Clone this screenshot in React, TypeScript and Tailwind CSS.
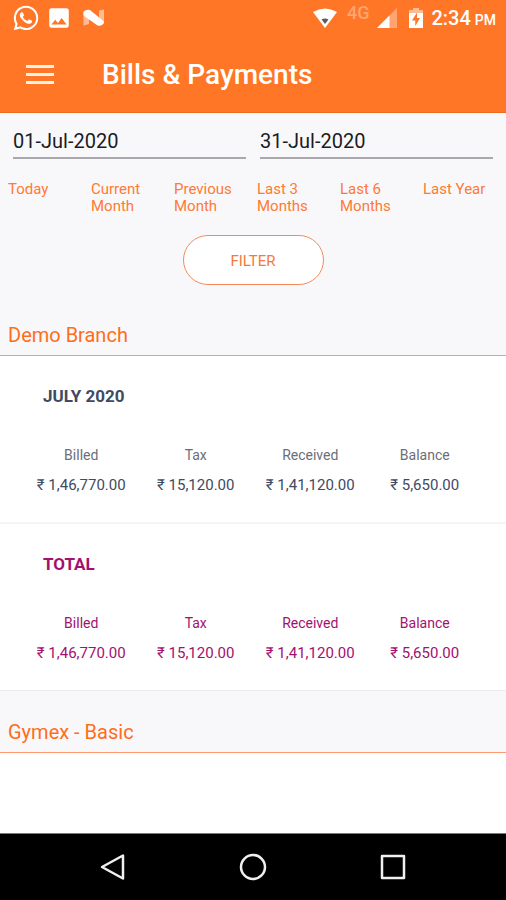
import { FaWhatsapp } from "react-icons/fa";
import { MdImage } from "react-icons/md";

const RANGES = [
  "Today",
  "Current Month",
  "Previous Month",
  "Last 3 Months",
  "Last 6 Months",
  "Last Year",
];

const AMOUNTS = [
  { label: "Billed", value: "₹ 1,46,770.00" },
  { label: "Tax", value: "₹ 15,120.00" },
  { label: "Received", value: "₹ 1,41,120.00" },
  { label: "Balance", value: "₹ 5,650.00" },
];

function StatusBar() {
  return (
    <div className="flex h-9 items-center justify-between pl-3 pr-2.5">
      <div className="flex items-center gap-1.5">
        <FaWhatsapp className="size-7" />
        <MdImage className="size-[26px]" />
        <svg viewBox="0 0 24 18" className="ml-1 h-4.5 w-6" aria-hidden="true">
          <path d="M1.500 2 L7 1 V15 L1.500 16.500 Z" fill="#fff" opacity="0.5" />
          <path d="M17 1.500 L22 0.500 V15 L17 16.500 Z" fill="#fff" opacity="0.5" />
          <path d="M1.500 3 Q4 0 8 1 L22 12.500 Q21 17.500 15.500 16.500 L1.500 6.500 Z" fill="#fff" />
        </svg>
      </div>
      <div className="flex items-center">
        <svg viewBox="0 0 24 20" className="h-5 w-6" aria-hidden="true">
          <path d="M0 4 Q12 -3 24 4 L12 20 Z" fill="#fff" />
          <path d="M8.500 11.500 Q12 9.500 15.500 11.500 L12 16 Z" fill="#5b5b60" />
        </svg>
        <span className="ml-2.5 mb-2.5 text-lg font-medium leading-5 text-[#ffa672]">
          4G
        </span>
        <svg viewBox="0 0 20 20" className="ml-2 h-5 w-5" aria-hidden="true">
          <path d="M20 0 V20 H0 Z" fill="#fff" opacity="0.35" />
          <path d="M12.500 7.500 V20 H0 Z" fill="#fff" />
        </svg>
        <svg viewBox="0 0 14 20" className="ml-3 h-5 w-3.5" aria-hidden="true">
          <path d="M4 0 H10 V2 H14 V5 H0 V2 H4 Z" fill="#fff" opacity="0.5" />
          <path d="M0 5 H14 V20 H0 Z" fill="#fff" />
          <path d="M8 4.500 L3 12.500 H6.300 V18 L11 10 H8 Z" fill="#ff7626" />
        </svg>
        <span className="ml-2 text-xl font-medium leading-6">2:34</span>
        <span className="ml-1 mt-1 text-sm font-medium leading-5">PM</span>
      </div>
    </div>
  );
}

function DateField({ label, value }: { label: string; value: string }) {
  return (
    <input
      type="text"
      aria-label={label}
      defaultValue={value}
      className="block h-9 w-full border-b-2 border-[#a9a9ad] bg-transparent pt-0.5 text-xl leading-8 text-[#1c1c1e] outline-none"
    />
  );
}

function BranchHeading({ name }: { name: string }) {
  return (
    <h2 className="border-b border-[#ff9a70] px-2 pb-1.5 pt-[27px] text-xl leading-7 text-[#ff6d1b]">
      {name}
    </h2>
  );
}

function Summary({ title, total = false }: { title: string; total?: boolean }) {
  return (
    <section
      className={
        total
          ? "px-6 pb-[21px] pt-[27px] text-[#a3106f]"
          : "border-b-2 border-[#f5f5f6] px-6 pb-[21px] pt-[27px] text-[#414a63]"
      }
    >
      <h3 className="pl-[19px] text-[17px] font-bold leading-[26px]">{title}</h3>
      <table className="mt-8 w-full table-fixed text-center">
        <thead>
          <tr>
            {AMOUNTS.map((a) => (
              <th
                key={a.label}
                className={
                  total
                    ? "p-0 text-sm font-normal leading-7"
                    : "p-0 text-sm font-normal leading-7 text-[#6b6e79]"
                }
              >
                {a.label}
              </th>
            ))}
          </tr>
        </thead>
        <tbody>
          <tr>
            {AMOUNTS.map((a) => (
              <td key={a.label} className="whitespace-nowrap p-0 text-[15px] leading-8">
                {a.value}
              </td>
            ))}
          </tr>
        </tbody>
      </table>
    </section>
  );
}

export default function App() {
  return (
    <div className="flex min-h-screen flex-col bg-[#f8f8fb] font-[Roboto,sans-serif]">
      <header className="border-b border-[#ee6a1f] bg-[#ff7626] text-white">
        <StatusBar />
        <div className="flex h-19 items-center pl-6.5">
          <button type="button" aria-label="Menu" className="flex w-7 flex-col gap-[5px]">
            <span className="h-[3px] bg-[#fff1e8]" />
            <span className="h-[3px] bg-[#fff1e8]" />
            <span className="h-[3px] bg-[#fff1e8]" />
          </button>
          <h1 className="ml-12 pt-0.5 text-[28px] font-medium leading-8">
            Bills &amp; Payments
          </h1>
        </div>
      </header>

      <main className="flex grow flex-col">
        <form className="pt-2.5" onSubmit={(e) => e.preventDefault()}>
          <div className="grid grid-cols-2 gap-3.5 px-[13px]">
            <DateField label="From date" value="01-Jul-2020" />
            <DateField label="To date" value="31-Jul-2020" />
          </div>
          <div className="mt-5.5 grid grid-cols-6 items-start pl-2">
            {RANGES.map((range) => (
              <button
                key={range}
                type="button"
                className="pr-4 text-left text-[15px] leading-[17px] text-[#ff7a33]"
              >
                {range}
              </button>
            ))}
          </div>
          <div className="mt-5 flex justify-center">
            <button
              type="submit"
              className="h-[50px] w-[141px] rounded-full border border-[#f58a58] bg-white pt-0.5 text-[15px] text-[#f47a3c]"
            >
              FILTER
            </button>
          </div>
        </form>

        <div className="mt-[9px]">
          <BranchHeading name="Demo Branch" />
          <div className="border-b border-[#ececee] bg-white">
            <Summary title="JULY 2020" />
            <Summary title="TOTAL" total />
          </div>
        </div>

        <div className="flex grow flex-col">
          <BranchHeading name="Gymex - Basic" />
          <div className="grow bg-white" />
        </div>
      </main>

      <nav className="flex h-[67px] items-center justify-center gap-28 border-t border-[#777] bg-black">
        <button type="button" aria-label="Back">
          <svg viewBox="0 0 28 28" className="size-7" fill="none" stroke="#f0f0f0" strokeWidth="2.500" strokeLinejoin="round">
            <path d="M24 2.500 V25.500 L3 14 Z" />
          </svg>
        </button>
        <button type="button" aria-label="Home">
          <svg viewBox="0 0 28 28" className="size-7" fill="none" stroke="#f0f0f0" strokeWidth="2.500">
            <circle cx="14" cy="14" r="12" />
          </svg>
        </button>
        <button type="button" aria-label="Recent apps">
          <svg viewBox="0 0 28 28" className="size-7" fill="none" stroke="#f0f0f0" strokeWidth="2.500" strokeLinejoin="round">
            <rect x="3" y="3" width="22" height="22" />
          </svg>
        </button>
      </nav>
    </div>
  );
}
